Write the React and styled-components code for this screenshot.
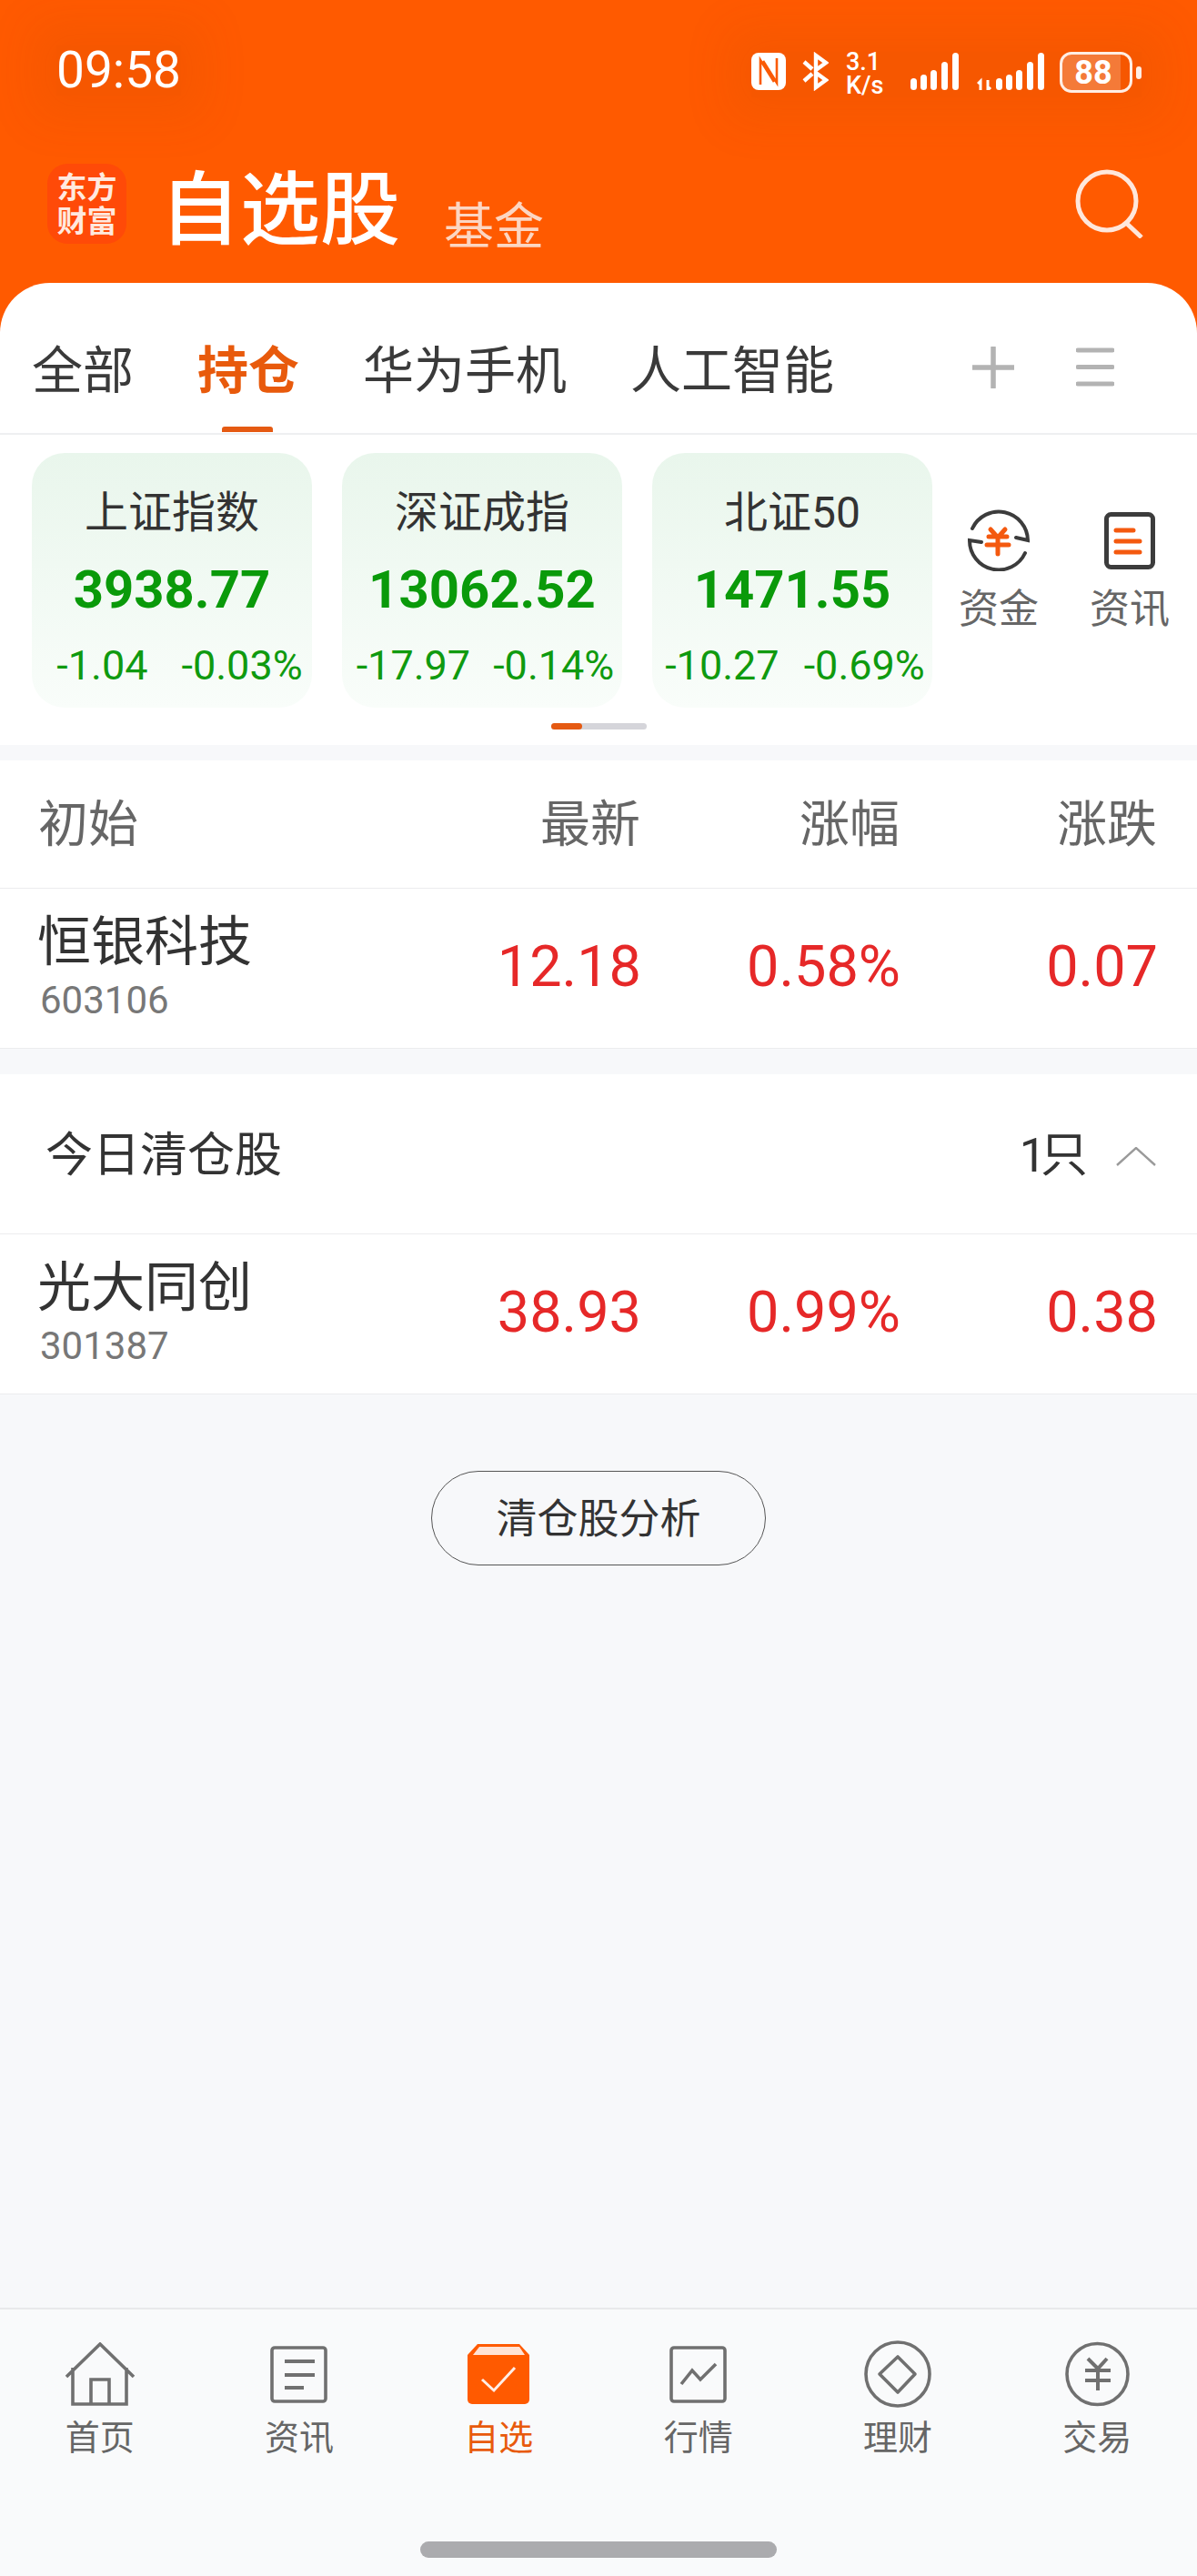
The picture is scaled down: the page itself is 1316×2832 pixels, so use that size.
import React from 'react'
import styled, { createGlobalStyle } from 'styled-components'

const GlobalStyle = createGlobalStyle`
  html, body {
    margin: 0;
    padding: 0;
    background: #f7f8fa;
  }
  * {
    box-sizing: border-box;
  }
`

const indexes = [
	{ name: '上证指数', value: '3938.77', change: '-1.04', pct: '-0.03%', gap: 37, shift: 17 },
	{ name: '深证成指', value: '13062.52', change: '-17.97', pct: '-0.14%', gap: 25, shift: 7 },
	{ name: '北证50', value: '1471.55', change: '-10.27', pct: '-0.69%', gap: 27, shift: 6 },
]

const navItems = [
	{ label: '首页', icon: <HomeIcon /> },
	{ label: '资讯', icon: <NewsIcon /> },
	{ label: '自选', icon: <WatchIcon />, active: true },
	{ label: '行情', icon: <ChartIcon /> },
	{ label: '理财', icon: <DiamondIcon /> },
	{ label: '交易', icon: <TradeIcon /> },
]

function NfcIcon() {
	return (
		<svg width="38" height="41" viewBox="0 0 38 41">
			<rect width="38" height="41" rx="8" fill="#fff" />
			<path d="M10 35V8l15 24M28 6v27L13 9" fill="none" stroke="#fa5a05" strokeWidth="2.6" />
		</svg>
	)
}

function BluetoothIcon() {
	return (
		<svg width="30" height="43" viewBox="0 0 30 43">
			<path d="M16 4l11 8-11 8zM16 23l11 8-11 8zM3 11l9 8M3 32l9-8" fill="none" stroke="#fff" strokeWidth="4.4" />
		</svg>
	)
}

function SignalIcon({ arrows }) {
	const bars = [[0, 13], [11, 17], [22, 22], [34, 31], [46, 41]]
	const left = arrows ? 21 : 0
	return (
		<svg width={left + 53} height="41" viewBox={`0 0 ${left + 53} 41`}>
			{arrows && (
				<path d="M4 41V31l-3 3M12 30v11l3-3" fill="none" stroke="#fff" strokeWidth="3" />
			)}
			{bars.map(([x, h]) => (
				<rect key={x} x={x + left} y={41 - h} width="7" height={h} rx="3.5" fill="#fff" />
			))}
		</svg>
	)
}

function SearchIcon() {
	return (
		<svg width="76" height="76" viewBox="0 0 76 76">
			<circle cx="35" cy="35" r="32" fill="none" stroke="#ffe7db" strokeWidth="5" />
			<path d="M56 59l17 16" fill="none" stroke="#ffe7db" strokeWidth="5" />
		</svg>
	)
}

function PlusIcon() {
	return (
		<svg width="46" height="46" viewBox="0 0 46 46">
			<path d="M23 1v44M1 23h44" fill="none" stroke="#b3b3b3" strokeWidth="5.5" strokeLinecap="round" />
		</svg>
	)
}

function MenuIcon() {
	return (
		<svg width="42" height="46" viewBox="0 0 42 46">
			<path d="M2 4h38M2 22.500h38M2 41h38" fill="none" stroke="#b3b3b3" strokeWidth="5" strokeLinecap="round" />
		</svg>
	)
}

function FundIcon() {
	return (
		<svg width="70" height="68" viewBox="0 0 70 68">
			<path d="M6 21A32 32 0 0 1 67 34L54 31M64 48A32 32 0 0 1 3 34L16 36" fill="none" stroke="#3c3c3c" strokeWidth="4" strokeLinecap="round" />
			<path d="M26 22l8 9 8-9M24 30h20M22 39h24M34 31v18" fill="none" stroke="#f4590f" strokeWidth="5" strokeLinecap="round" />
		</svg>
	)
}

function InfoIcon() {
	return (
		<svg width="56" height="63" viewBox="0 0 56 63">
			<rect x="2.500" y="2.500" width="51" height="58" rx="5" fill="none" stroke="#3c3c3c" strokeWidth="5" />
			<path d="M13 20h19M13 32h26M13 44h26" fill="none" stroke="#f4590f" strokeWidth="5" strokeLinecap="round" />
		</svg>
	)
}

function HomeIcon() {
	return (
		<svg width="78" height="70" viewBox="0 0 78 70">
			<path d="M2 38L39 2l37 36M9 28v40h59V28M29 68V41h20v27" fill="none" stroke="#707070" strokeWidth="3.600" />
		</svg>
	)
}

function NewsIcon() {
	return (
		<svg width="63" height="63" viewBox="0 0 63 63">
			<rect x="2" y="2" width="59" height="59" rx="3" fill="none" stroke="#707070" strokeWidth="3.600" />
			<path d="M16 17h33M16 32h33M16 46h21" fill="none" stroke="#707070" strokeWidth="4" />
		</svg>
	)
}

function WatchIcon() {
	return (
		<svg width="68" height="66" viewBox="0 0 68 66">
			<path d="M11 0h46l11 12v49a5 5 0 0 1-5 5H5a5 5 0 0 1-5-5V12z" fill="#ff5a00" />
			<path d="M13 3h44l6 9H6z" fill="#ffe3d5" />
			<path d="M16 39l13 12 23-25" fill="none" stroke="#ffeee6" strokeWidth="3" />
		</svg>
	)
}

function ChartIcon() {
	return (
		<svg width="63" height="63" viewBox="0 0 63 63">
			<rect x="2" y="2" width="59" height="59" rx="3" fill="none" stroke="#707070" strokeWidth="3.600" />
			<path d="M13 42l12-15 9 10 17-17" fill="none" stroke="#707070" strokeWidth="3.600" />
		</svg>
	)
}

function DiamondIcon() {
	return (
		<svg width="74" height="74" viewBox="0 0 74 74">
			<circle cx="37" cy="37" r="35" fill="none" stroke="#707070" strokeWidth="3.600" />
			<path d="M17 37l20-19 19 19-19 20z" fill="none" stroke="#707070" strokeWidth="3.600" strokeLinejoin="round" />
		</svg>
	)
}

function TradeIcon() {
	return (
		<svg width="71" height="72" viewBox="0 0 71 72">
			<circle cx="35.500" cy="36" r="33.500" fill="none" stroke="#707070" strokeWidth="3.600" />
			<path d="M25 19l11 11 10-11M22 32h28M22 43h28M36 30v24" fill="none" stroke="#707070" strokeWidth="4" />
		</svg>
	)
}

const Stock = ({ name, code, price, pct, diff }) => (
	<StockRow>
		<NameCell>
			<StockName>{name}</StockName>
			<StockCode>{code}</StockCode>
		</NameCell>
		<Quote>{price}</Quote>
		<Quote>{pct}</Quote>
		<Quote>{diff}</Quote>
	</StockRow>
)

const App = () => (
	<Page>
		<GlobalStyle />
		<Top>
			<StatusBar>
				<Time>09:58</Time>
				<StatusIcons>
					<NfcIcon />
					<BluetoothIcon />
					<Speed>3.1<br />K/s</Speed>
					<SignalIcon />
					<SignalIcon arrows />
					<Battery>88</Battery>
					<BatteryCap />
				</StatusIcons>
			</StatusBar>
			<TitleBar>
				<Logo>东方<br />财富</Logo>
				<Title>自选股</Title>
				<SubTitle>基金</SubTitle>
				<SearchBox><SearchIcon /></SearchBox>
			</TitleBar>
			<TabPanel>
				<Tab>全部</Tab>
				<Tab $active>持仓</Tab>
				<Tab>华为手机</Tab>
				<Tab>人工智能</Tab>
				<TabTools>
					<PlusIcon />
					<MenuIcon />
				</TabTools>
			</TabPanel>
		</Top>

		<Strip>
			<CardRow>
				<Cards>
					{indexes.map((item) => (
						<IndexCard key={item.name}>
							<IndexName>{item.name}</IndexName>
							<IndexValue>{item.value}</IndexValue>
							<IndexChange $gap={item.gap} $shift={item.shift}>
								<span>{item.change}</span>
								<span>{item.pct}</span>
							</IndexChange>
						</IndexCard>
					))}
				</Cards>
				<SideItem>
					<SideIcon><FundIcon /></SideIcon>
					<SideLabel>资金</SideLabel>
				</SideItem>
				<SideItem>
					<SideIcon><InfoIcon /></SideIcon>
					<SideLabel>资讯</SideLabel>
				</SideItem>
			</CardRow>
			<ScrollTrack><ScrollThumb /></ScrollTrack>
		</Strip>

		<ListBlock>
			<HeadRow>
				<span>初始</span>
				<HeadCell>最新</HeadCell>
				<HeadCell>涨幅</HeadCell>
				<HeadCell>涨跌</HeadCell>
			</HeadRow>
			<Stock name="恒银科技" code="603106" price="12.18" pct="0.58%" diff="0.07" />
		</ListBlock>

		<SoldBlock>
			<SoldHead>
				<SoldTitle>今日清仓股</SoldTitle>
				<SoldCount>1只</SoldCount>
				<svg width="44" height="21" viewBox="0 0 44 21">
					<path d="M1 20L22 1l21 19" fill="none" stroke="#9a9a9a" strokeWidth="2.400" />
				</svg>
			</SoldHead>
			<Stock name="光大同创" code="301387" price="38.93" pct="0.99%" diff="0.38" />
		</SoldBlock>

		<AnalyseButton>清仓股分析</AnalyseButton>

		<BottomNav>
			<NavGrid>
				{navItems.map((item) => (
					<NavItem key={item.label}>
						<NavIconBox>{item.icon}</NavIconBox>
						<NavLabel $active={item.active}>{item.label}</NavLabel>
					</NavItem>
				))}
			</NavGrid>
			<HomeBar />
		</BottomNav>
	</Page>
)

export default App

const font = `Roboto, "Noto Sans CJK SC", sans-serif`

const Page = styled.div`
  width: 1316px;
  height: 2832px;
  display: flex;
  flex-direction: column;
  overflow: hidden;
  background: #f7f8fa;
  font-family: ${font};
  color: #333;
`

const Top = styled.header`
  background: #ff5a00;
`

const StatusBar = styled.div`
  height: 170px;
  display: flex;
  align-items: flex-start;
  justify-content: space-between;
  padding: 50px 61px 0 62px;
`

const Time = styled.div`
  font-size: 55px;
  line-height: 55px;
  color: #fff;
  background: rgba(170, 70, 0, 0.1);
  box-shadow: 0 0 50px 26px rgba(170, 70, 0, 0.1);
`

const StatusIcons = styled.div`
  display: flex;
  align-items: flex-start;
  margin-top: 7px;
  background: rgba(170, 70, 0, 0.1);
  box-shadow: 0 0 50px 26px rgba(170, 70, 0, 0.1);

  & > svg:nth-child(1) {
    margin: 1px 17px 0 0;
  }
  & > svg:nth-child(2) {
    margin-right: 19px;
  }
  & > svg:nth-child(4) {
    margin: 1px 20px 0 0;
  }
  & > svg:nth-child(5) {
    margin: 1px 17px 0 0;
  }
`

const Speed = styled.div`
  width: 42px;
  margin-right: 29px;
  margin-top: -2px;
  font-size: 27px;
  line-height: 26px;
  font-weight: 500;
  color: #fff;
  white-space: nowrap;
`

const Battery = styled.div`
  width: 80px;
  height: 45px;
  border: 3.5px solid #ffeee4;
  border-radius: 13px;
  display: flex;
  align-items: center;
  justify-content: center;
  padding-right: 6px;
  background: linear-gradient(90deg, #f47a38 86%, transparent 86%);
  color: #fff;
  font-size: 36px;
  line-height: 36px;
  font-weight: 700;
`

const BatteryCap = styled.div`
  width: 6px;
  height: 14px;
  margin: 16px 0 0 4px;
  border-radius: 3px;
  background: #ffeee4;
`

const TitleBar = styled.div`
  height: 141px;
  display: flex;
  align-items: flex-start;
  padding: 10px 58px 0 52px;
`

const Logo = styled.div`
  width: 87px;
  height: 88px;
  border-radius: 22px;
  background: #ff4a08;
  color: #ffe9df;
  font-family: "Noto Sans CJK SC", sans-serif;
  font-size: 33px;
  line-height: 37px;
  font-weight: 700;
  text-align: center;
  padding-top: 6px;
`

const Title = styled.h1`
  margin: -1px 0 0 37px;
  font-family: "Noto Sans CJK SC", sans-serif;
  font-size: 88px;
  line-height: 88px;
  font-weight: 500;
  color: #fff;
`

const SubTitle = styled.div`
  margin: 37px 0 0 48px;
  font-family: "Noto Sans CJK SC", sans-serif;
  font-size: 55px;
  line-height: 55px;
  color: #fcd6c2;
`

const SearchBox = styled.div`
  margin: 6px 0 0 auto;
  height: 76px;
`

const TabPanel = styled.nav`
  height: 167px;
  display: flex;
  align-items: flex-start;
  gap: 70px;
  padding: 64px 91px 0 35px;
  background: #fff;
  border-radius: 55px 55px 0 0;
  border-bottom: 2px solid #eeeff1;
`

const Tab = styled.div`
  position: relative;
  font-family: "Noto Sans CJK SC", sans-serif;
  font-size: 56px;
  line-height: 55px;
  font-weight: ${(p) => (p.$active ? 700 : 400)};
  color: ${(p) => (p.$active ? '#e85a0c' : '#3a3a3a')};

  ${(p) => p.$active && `
    &::after {
      content: '';
      position: absolute;
      left: 27px;
      bottom: -45px;
      width: 56px;
      height: 6px;
      border-radius: 3px 3px 0 0;
      background: #e55a12;
    }
  `}
`

const TabTools = styled.div`
  margin: 6px 0 0 auto;
  display: flex;
  gap: 68px;
`

const Strip = styled.section`
  height: 341px;
  padding: 20px 2px 0 35px;
  background: #fff;
`

const CardRow = styled.div`
  display: flex;
  align-items: flex-start;
`

const Cards = styled.div`
  display: flex;
  gap: 33px;
  margin-right: 1px;
`

const IndexCard = styled.div`
  width: 308px;
  height: 280px;
  flex: none;
  padding-top: 41px;
  border-radius: 36px;
  background: linear-gradient(180deg, #e9f6ec 0%, #f9fdfa 100%);
  text-align: center;
`

const IndexName = styled.div`
  font-size: 48px;
  line-height: 50px;
  color: #333;
`

const IndexValue = styled.div`
  margin-top: 30px;
  font-size: 58px;
  line-height: 58px;
  font-weight: 700;
  color: #0a9a0a;
`

const IndexChange = styled.div`
  display: flex;
  justify-content: center;
  gap: ${(p) => p.$gap}px;
  margin-top: 33px;
  padding-left: ${(p) => p.$shift}px;
  font-size: 45px;
  line-height: 44px;
  color: #0f9a0f;
  white-space: nowrap;
`

const SideItem = styled.div`
  width: 144px;
  flex: none;
  margin-top: 62px;
  display: flex;
  flex-direction: column;
  align-items: center;
`

const SideIcon = styled.div`
  height: 68px;
  display: flex;
  align-items: center;
`

const SideLabel = styled.div`
  margin-top: 20px;
  font-size: 44px;
  line-height: 44px;
  color: #666;
`

const ScrollTrack = styled.div`
  width: 105px;
  height: 7px;
  margin: 17px 0 0 571px;
  border-radius: 4px;
  background: #d5d5da;
`

const ScrollThumb = styled.div`
  width: 34px;
  height: 7px;
  border-radius: 4px;
  background: #e55a12;
`

const ListBlock = styled.section`
  margin-top: 17px;
  background: #fff;
`

const HeadRow = styled.div`
  height: 141px;
  display: grid;
  grid-template-columns: 378px 284px 285px 283px;
  align-items: center;
  padding: 0 44px 0 42px;
  border-bottom: 1px solid #ececee;
  font-size: 55px;
  line-height: 55px;
  color: #666;
`

const HeadCell = styled.span`
  text-align: right;
`

const StockRow = styled.div`
  height: 176px;
  display: grid;
  grid-template-columns: 378px 284px 285px 283px;
  align-items: center;
  padding: 0 44px 0 42px;
  border-bottom: 1px solid #ececee;
`

const NameCell = styled.div`
  margin-top: -3px;
`

const StockName = styled.div`
  margin-left: -1px;
  font-size: 59px;
  line-height: 60px;
  color: #333;
`

const StockCode = styled.div`
  margin: 13px 0 0 2px;
  font-size: 42px;
  line-height: 42px;
  color: #777;
`

const Quote = styled.div`
  margin-right: -1px;
  padding-bottom: 5px;
  font-size: 63px;
  line-height: 63px;
  color: #e62828;
  text-align: right;
`

const SoldBlock = styled.section`
  margin-top: 28px;
  background: #fff;
`

const SoldHead = styled.div`
  height: 176px;
  display: flex;
  align-items: center;
  padding: 5px 45px 0 50px;
  border-bottom: 1px solid #ececee;
`

const SoldTitle = styled.div`
  font-size: 52px;
  line-height: 52px;
  color: #333;
`

const SoldCount = styled.div`
  margin: 0 37px 0 auto;
  font-size: 52px;
  line-height: 52px;
  letter-spacing: -6px;
  color: #333;
`

const AnalyseButton = styled.button`
  width: 368px;
  height: 104px;
  margin: 84px 0 0 474px;
  padding: 0 0 5px;
  background: transparent;
  border: 1.5px solid #555;
  border-radius: 52px;
  font-family: "Noto Sans CJK SC", sans-serif;
  font-size: 45px;
  color: #333;
`

const BottomNav = styled.nav`
  margin-top: auto;
  height: 295px;
  display: flex;
  flex-direction: column;
  background: #f9fafb;
  border-top: 2px solid #e8e9eb;
`

const NavGrid = styled.div`
  display: grid;
  grid-template-columns: repeat(6, 1fr);
  padding-top: 34px;
`

const NavItem = styled.div`
  display: flex;
  flex-direction: column;
  align-items: center;
`

const NavIconBox = styled.div`
  height: 74px;
  display: flex;
  align-items: center;
`

const NavLabel = styled.div`
  margin-top: 14px;
  font-size: 38px;
  line-height: 38px;
  color: ${(p) => (p.$active ? '#e85a0c' : '#666')};
`

const HomeBar = styled.div`
  width: 392px;
  height: 18px;
  margin: auto auto 20px;
  border-radius: 9px;
  background: #ababae;
`
